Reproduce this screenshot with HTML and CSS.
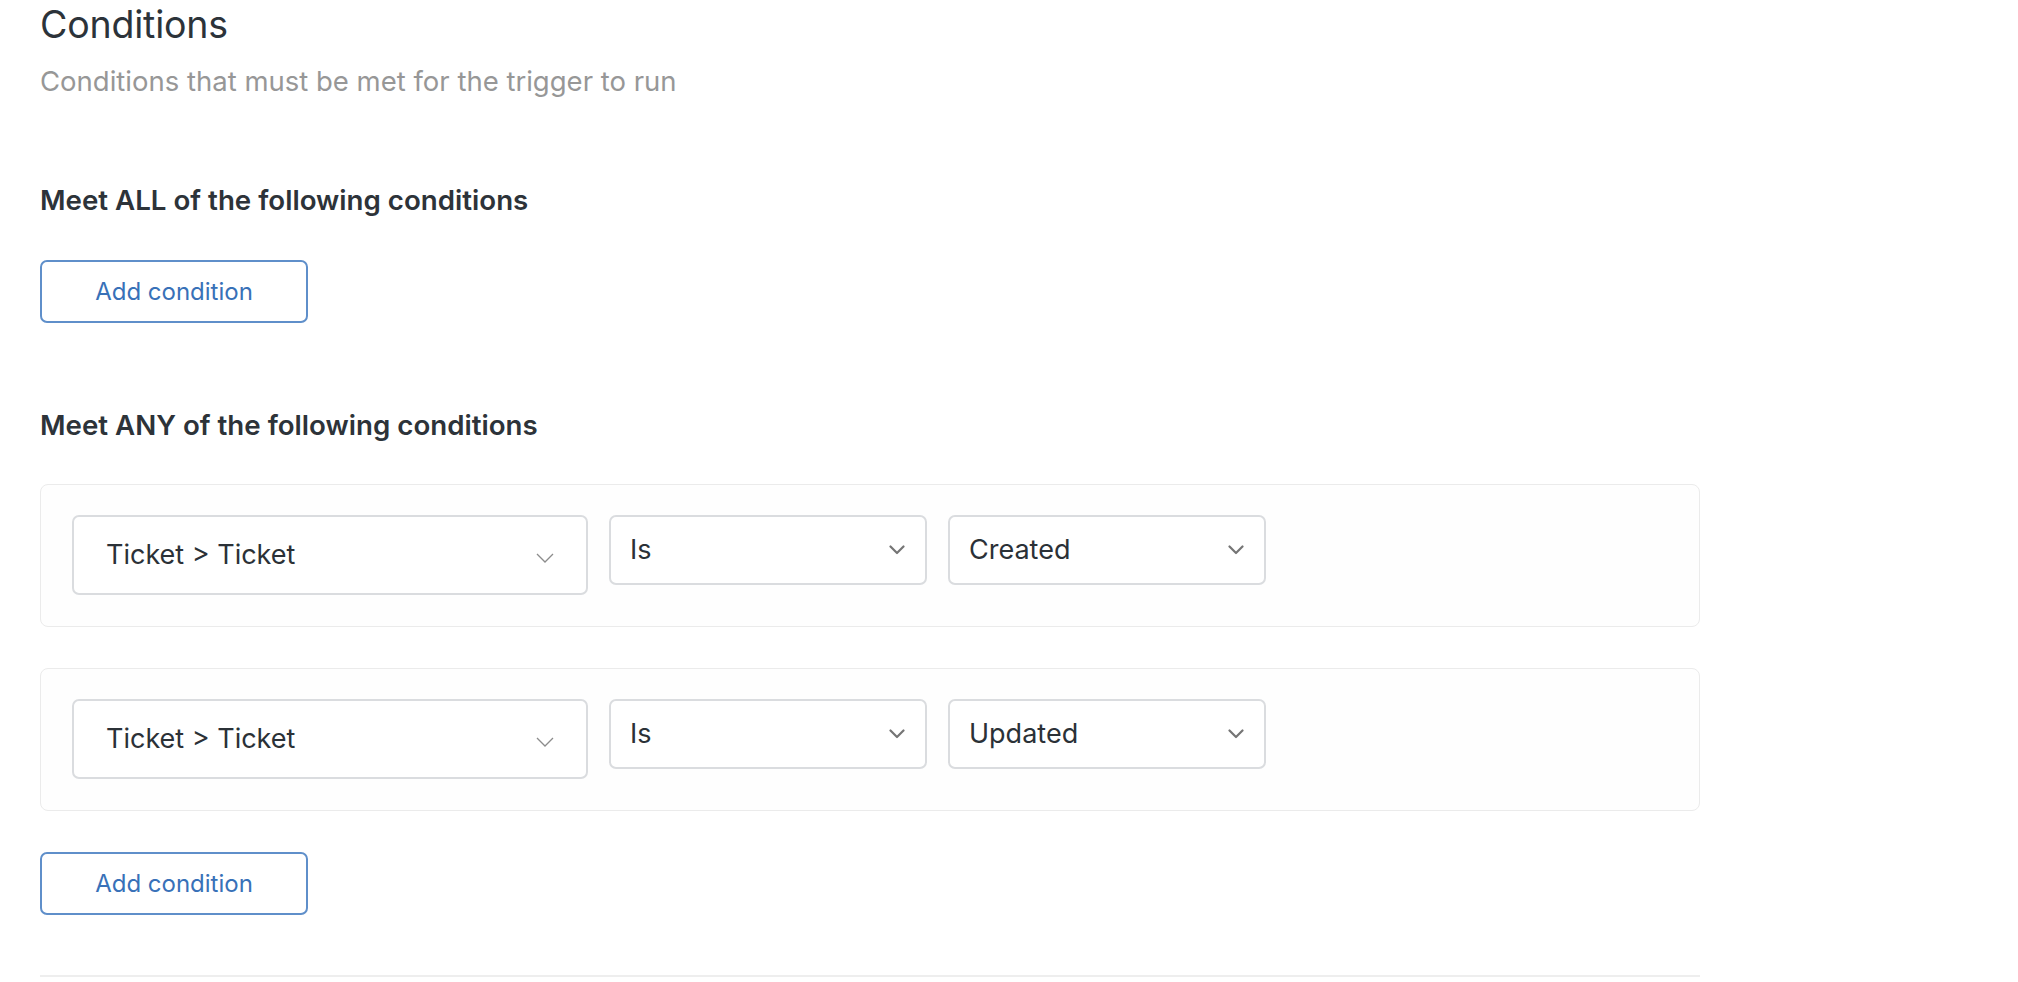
FILE: index.html
```html
<!DOCTYPE html>
<html lang="en">
<head>
<meta charset="utf-8">
<title>Conditions</title>
<link rel="stylesheet" href="styles.css">
</head>
<body>
<main class="page">
  <h1 class="title">Conditions</h1>
  <p class="subtitle">Conditions that must be met for the trigger to run</p>

  <section class="group group-all">
    <h2 class="group-heading">Meet ALL of the following conditions</h2>
    <button class="add-btn" type="button">Add condition</button>
  </section>

  <section class="group group-any">
    <h2 class="group-heading">Meet ANY of the following conditions</h2>
    <div class="cond-list">
      <div class="cond-card">
        <div class="select select-field">
          <span class="select-value">Ticket &gt; Ticket</span>
          <svg class="chev chev-thin" width="18" height="10" viewBox="0 0 18 10"><path d="M1 1 L9 9 L17 1" fill="none" stroke="#8c8c8c" stroke-width="1.3"/></svg>
        </div>
        <div class="select select-small">
          <span class="select-value">Is</span>
          <svg class="chev" width="16" height="10" viewBox="0 0 16 10"><path d="M1.5 1.5 L8 8 L14.5 1.5" fill="none" stroke="#757575" stroke-width="2.2" stroke-linecap="round" stroke-linejoin="round"/></svg>
        </div>
        <div class="select select-small">
          <span class="select-value">Created</span>
          <svg class="chev" width="16" height="10" viewBox="0 0 16 10"><path d="M1.5 1.5 L8 8 L14.5 1.5" fill="none" stroke="#757575" stroke-width="2.2" stroke-linecap="round" stroke-linejoin="round"/></svg>
        </div>
      </div>
      <div class="cond-card">
        <div class="select select-field">
          <span class="select-value">Ticket &gt; Ticket</span>
          <svg class="chev chev-thin" width="18" height="10" viewBox="0 0 18 10"><path d="M1 1 L9 9 L17 1" fill="none" stroke="#8c8c8c" stroke-width="1.3"/></svg>
        </div>
        <div class="select select-small">
          <span class="select-value">Is</span>
          <svg class="chev" width="16" height="10" viewBox="0 0 16 10"><path d="M1.5 1.5 L8 8 L14.5 1.5" fill="none" stroke="#757575" stroke-width="2.2" stroke-linecap="round" stroke-linejoin="round"/></svg>
        </div>
        <div class="select select-small">
          <span class="select-value">Updated</span>
          <svg class="chev" width="16" height="10" viewBox="0 0 16 10"><path d="M1.5 1.5 L8 8 L14.5 1.5" fill="none" stroke="#757575" stroke-width="2.2" stroke-linecap="round" stroke-linejoin="round"/></svg>
        </div>
      </div>
    </div>
    <button class="add-btn add-btn-any" type="button">Add condition</button>
  </section>

  <hr class="divider">
</main>
</body>
</html>
```

FILE: styles.css
```css
* { box-sizing: border-box; }

html, body {
  margin: 0;
  padding: 0;
  background: #ffffff;
}

body {
  font-family: Inter, "Noto Sans", "Liberation Sans", sans-serif;
  color: #2c333a;
}

.page {
  width: 1700px;
  padding: 3px 0 0 40px;
}

.title {
  margin: 0;
  font-size: 37.5px;
  line-height: 44px;
  font-weight: 400;
  color: #2c333a;
  letter-spacing: -0.2px;
}

.subtitle {
  margin: 18px 0 0;
  font-size: 27.5px;
  line-height: 32px;
  font-weight: 400;
  color: #979797;
}

.group-heading {
  margin: 0;
  font-size: 27.7px;
  line-height: 34px;
  font-weight: 600;
  color: #2d3339;
}

.group-all {
  margin-top: 86px;
}

.add-btn {
  display: flex;
  align-items: center;
  justify-content: center;
  width: 268px;
  height: 63px;
  margin-top: 43px;
  padding: 0;
  background: #ffffff;
  border: 2px solid #5f8fca;
  border-radius: 7px;
  font-family: Inter, "Noto Sans", "Liberation Sans", sans-serif;
  font-size: 24px;
  font-weight: 400;
  color: #3871b8;
  cursor: pointer;
}

.group-any {
  margin-top: 85px;
}

.cond-list {
  display: flex;
  flex-direction: column;
  gap: 41px;
  margin-top: 42px;
}

.cond-card {
  display: flex;
  align-items: flex-start;
  gap: 21px;
  width: 1660px;
  height: 143px;
  padding: 30px 31px 31px;
  border: 1.5px solid #ebebeb;
  border-radius: 8px;
  background: #fefefe;
}

.select {
  display: flex;
  align-items: center;
  justify-content: space-between;
  background: #ffffff;
  border: 2px solid #dadcdf;
  border-radius: 7px;
  font-size: 27px;
  color: #2b3137;
}

.select-field {
  width: 516px;
  height: 80px;
  padding: 0 32px 0 32px;
}

.select-small {
  width: 318px;
  height: 70px;
  padding: 0 20px 0 19px;
}

.select-value {
  line-height: 34px;
}

.chev {
  display: block;
  flex: none;
}

.chev-thin {
  margin-top: 6px;
}

.add-btn-any {
  margin-top: 41px;
}

.divider {
  margin: 60px 0 0;
  width: 1660px;
  height: 2px;
  border: 0;
  background: #eeeeee;
}
```
